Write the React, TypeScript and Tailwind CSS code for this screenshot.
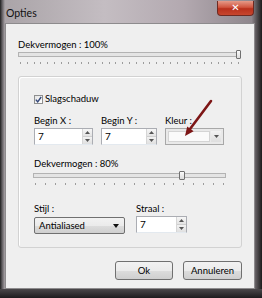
import React from "react";

function Spinner() {
  return (
    <div className="flex flex-col w-[10px] h-full border-l border-[#d6d6d6]">
      <div className="flex-1 flex items-center justify-center bg-[linear-gradient(180deg,#f6f6f6,#e4e4e4)] border-b border-[#cfcfcf]">
        <svg width="5" height="3" viewBox="0 0 5 3"><polygon points="2.5,0 5,3 0,3" fill="#555" /></svg>
      </div>
      <div className="flex-1 flex items-center justify-center bg-[linear-gradient(180deg,#f2f2f2,#e0e0e0)]">
        <svg width="5" height="3" viewBox="0 0 5 3"><polygon points="0,0 5,0 2.5,3" fill="#555" /></svg>
      </div>
    </div>
  );
}

function SpinInput({ w }: { w: string }) {
  return (
    <div className={`flex h-[17px] bg-white border border-[#abadb3] border-b-[#e3e9ef] ${w}`}>
      <div className="flex-1 pl-[3px] text-[10px] leading-[15px]">7</div>
      <Spinner />
    </div>
  );
}

function Ticks({ count, w }: { count: number; w: string }) {
  return (
    <div className={`flex justify-between px-[2px] mt-[3px] ${w}`}>
      {Array.from({ length: count }).map((_, i) => (
        <div key={i} className="w-px h-[2px] bg-[#9c9c9c]" />
      ))}
    </div>
  );
}

const btn =
  "h-[19px] rounded-[3px] border border-[#707070] bg-[linear-gradient(180deg,#f2f2f2_0%,#ebebeb_50%,#dddddd_51%,#cfcfcf_100%)] flex items-center justify-center text-[9.5px] leading-[12px]";

export default function App() {
  return (
    <div className="relative w-[262px] h-[298px] overflow-hidden font-['Lato',sans-serif] text-[#000000] bg-[linear-gradient(90deg,#1e1e1e_0px,#5d5a5d_2px,#aaa4a8_5px,#c4bdc2_40%,#b3a9b0_70%,#8f878d_96%,#1c1c1c_100%)]">
      <div className="flex flex-col h-full">
        {/* title bar */}
        <div className="h-[23px] flex justify-between items-start pl-[6px] pr-[8px]">
          <div className="pt-[7px] text-[10.5px] leading-[12px] text-[#111111]">Opties</div>
          <div className="mt-[1px] w-[37px] h-[15px] rounded-b-[4px] border border-[#6e2a22] border-t-0 bg-[linear-gradient(180deg,#e59a88_0%,#d0553f_45%,#b8301c_55%,#c7462e_100%)] flex items-center justify-center">
            <span className="text-white text-[10px] leading-[10px] font-bold font-['DejaVu_Sans',sans-serif]">✕</span>
          </div>
        </div>
        {/* content panel */}
        <div className="ml-[5px] mr-[7px] h-[266px] border border-[#8d8b8d] bg-[#efefef] flex flex-col pl-[12px] pr-[12px]">
          <div className="pt-[15px] text-[9.5px] leading-[12px]">Dekvermogen : 100%</div>
          <div className="relative w-[223px] h-[8px]">
            <div className="absolute left-0 top-[1px] w-[221px] h-[5px] border border-[#b3b3b3] bg-[#e4e4e4]" />
            <div className="absolute left-[218px] top-[-1px] w-[5px] h-[9px] rounded-[1px] border border-[#707070] bg-[linear-gradient(180deg,#fbfbfb,#dcdcdc)]" />
          </div>
          <Ticks count={33} w="w-[223px]" />
          {/* group box */}
          <div className="mt-[12px] w-[224px] h-[172px] border border-[#d2d2d2] rounded-[3px] shadow-[inset_1px_1px_0_#ffffff] flex flex-col pl-[15px] relative">
            <div className="pt-[16px] flex items-center h-[28px]">
              <div className="w-[9px] h-[9px] border border-[#8e8f8f] bg-[linear-gradient(135deg,#e4e4e4,#ffffff)] flex items-center justify-center">
                <svg width="7" height="7" viewBox="0 0 7 7"><path d="M0.8 3.6 L2.7 5.8 L6.2 1" stroke="#34487a" strokeWidth="1.4" fill="none" /></svg>
              </div>
              <span className="ml-[2px] text-[9.5px] leading-[12px]">Slagschaduw</span>
            </div>
            <div className="mt-[10px] flex">
              <div className="w-[67px] flex flex-col">
                <div className="text-[9.5px] leading-[12px]">Begin X :</div>
                <div className="mt-[1px]"><SpinInput w="w-[59px]" /></div>
              </div>
              <div className="w-[64px] flex flex-col">
                <div className="text-[9.5px] leading-[12px]">Begin Y :</div>
                <div className="mt-[1px]"><SpinInput w="w-[56px]" /></div>
              </div>
              <div className="flex flex-col">
                <div className="text-[9.5px] leading-[12px]">Kleur :</div>
                <div className="mt-[1px] w-[59px] h-[17px] border border-[#a8a8a8] bg-[#e9e9e9] p-[2px] flex">
                  <div className="flex-1 bg-[#fafafa] border border-[#d4d4d4]" />
                  <div className="w-[10px] ml-[1px] flex items-center justify-center bg-[linear-gradient(180deg,#f3f3f3,#dedede)]">
                    <svg width="5" height="3" viewBox="0 0 5 3"><polygon points="0,0 5,0 2.5,3" fill="#555" /></svg>
                  </div>
                </div>
              </div>
            </div>
            <div className="mt-[13px] text-[9.5px] leading-[12px]">Dekvermogen : 80%</div>
            <div className="relative ml-[-1px] mt-[2px] w-[193px] h-[8px]">
              <div className="absolute left-0 top-[1px] w-[193px] h-[5px] border border-[#b3b3b3] bg-[#e4e4e4]" />
              <div className="absolute left-[146px] top-[-1px] w-[6px] h-[9px] rounded-[1px] border border-[#707070] bg-[linear-gradient(180deg,#fbfbfb,#dcdcdc)]" />
            </div>
            <div className="ml-[-1px]"><Ticks count={20} w="w-[193px]" /></div>
            <div className="mt-[18px] flex">
              <div className="w-[102px] flex flex-col">
                <div className="text-[9.5px] leading-[12px]">Stijl :</div>
                <div className="mt-[2px] w-[91px] h-[17px] rounded-[2px] border border-[#707070] bg-[linear-gradient(180deg,#f2f2f2_0%,#ebebeb_50%,#dddddd_51%,#cfcfcf_100%)] flex items-center justify-between pl-[4px] pr-[5px]">
                  <span className="text-[9.5px] leading-[12px]">Antialiased</span>
                  <svg width="6" height="4" viewBox="0 0 6 4"><polygon points="0,0 6,0 3,4" fill="#111" /></svg>
                </div>
              </div>
              <div className="flex flex-col">
                <div className="text-[9.5px] leading-[12px]">Straal :</div>
                <div className="mt-[1px]"><SpinInput w="w-[51px]" /></div>
              </div>
            </div>
          </div>
          {/* buttons */}
          <div className="mt-[13px] flex justify-end gap-[10px] w-[224px]">
            <div className={`${btn} w-[58px]`}>Ok</div>
            <div className={`${btn} w-[59px]`}>Annuleren</div>
          </div>
        </div>
        {/* bottom frame */}
        <div className="flex-1 bg-[linear-gradient(180deg,#4a474a,#1d1c1e)]" />
      </div>
      {/* annotation arrow */}
      <svg className="absolute inset-0 pointer-events-none" width="262" height="298" viewBox="0 0 262 298">
        <line x1="211" y1="101" x2="190" y2="129" stroke="#7d1616" strokeWidth="2.6" strokeLinecap="round" />
        <polygon points="185,136 193.6,131.2 187.2,126.4" fill="#7d1616" />
      </svg>
    </div>
  );
}
